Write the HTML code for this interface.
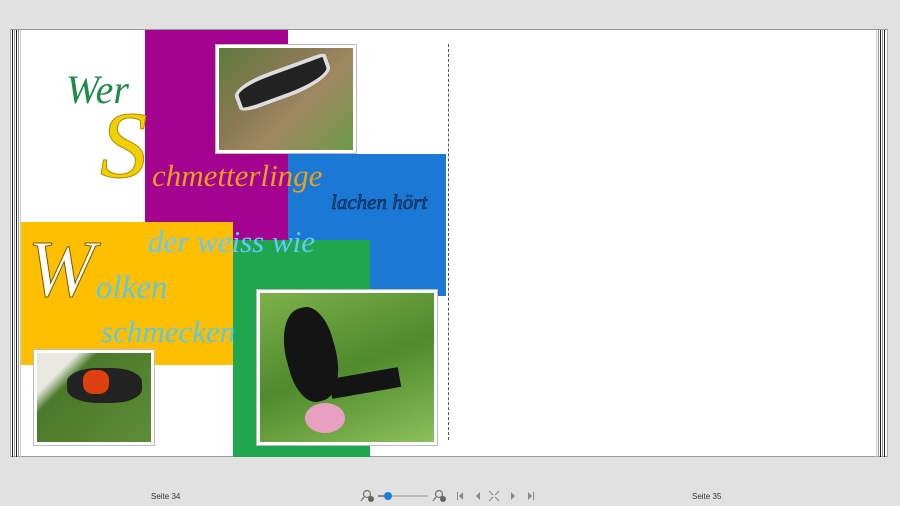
<!DOCTYPE html>
<html><head><meta charset="utf-8"><style>
*{margin:0;padding:0;box-sizing:border-box}
body{width:900px;height:506px;background:#e1e1e1;position:relative;overflow:hidden;font-family:"Liberation Sans",sans-serif}
.a{position:absolute}
.t{position:absolute;font-family:"Liberation Serif",serif;font-style:italic;white-space:nowrap;line-height:1}
.photo{position:absolute;border:3px solid #fff;box-shadow:0 0 0 1px #bbb}
</style></head><body>
<div class="a" style="left:10px;top:29px;width:878px;height:428px;background:#fff;border-top:1px solid #999;border-bottom:1px solid #999"></div>
<div class="a" style="left:10px;top:29px;width:1px;height:428px;background:#aaa"></div>
<div class="a" style="left:12px;top:30px;width:1px;height:427px;background:#222"></div>
<div class="a" style="left:14px;top:30px;width:1px;height:427px;background:#999"></div>
<div class="a" style="left:16px;top:30px;width:1px;height:427px;background:#222"></div>
<div class="a" style="left:18px;top:30px;width:1px;height:427px;background:#999"></div>
<div class="a" style="left:20px;top:30px;width:1px;height:427px;background:#ccc"></div>
<div class="a" style="left:876px;top:30px;width:1px;height:427px;background:#ccc"></div>
<div class="a" style="left:878px;top:30px;width:1px;height:427px;background:#999"></div>
<div class="a" style="left:880px;top:30px;width:1px;height:427px;background:#222"></div>
<div class="a" style="left:882px;top:30px;width:1px;height:427px;background:#999"></div>
<div class="a" style="left:884px;top:30px;width:1px;height:427px;background:#222"></div>
<div class="a" style="left:887px;top:29px;width:1px;height:428px;background:#aaa"></div>
<div class="a" style="left:448px;top:44px;width:0;height:396px;border-left:1px dashed #555"></div>
<div class="a" style="left:145px;top:30px;width:143px;height:232px;background:#a3038e"></div>
<div class="a" style="left:288px;top:154px;width:158px;height:142px;background:#1b79d5"></div>
<div class="a" style="left:21px;top:222px;width:212px;height:143px;background:#fdbf00"></div>
<div class="a" style="left:233px;top:240px;width:137px;height:217px;background:#1fa64e"></div>
<div class="photo" style="left:216px;top:45px;width:140px;height:108px;background:linear-gradient(135deg,#5e7a3a,#8b7a55 40%,#a08860 60%,#6d9a4a)">
 <div class="a" style="left:14px;top:20px;width:100px;height:30px;background:#222;transform:rotate(-20deg);border-radius:40% 10% 50% 20%;box-shadow:inset 0 0 0 4px #ddd"></div>
</div>
<div class="photo" style="left:257px;top:290px;width:180px;height:155px;background:linear-gradient(160deg,#7db04a,#4f8a2c 50%,#8cc05a)">
 <div class="a" style="left:26px;top:14px;width:50px;height:95px;background:#141414;border-radius:50% 40% 50% 40%;transform:rotate(-15deg)"></div>
 <div class="a" style="left:70px;top:80px;width:70px;height:20px;background:#141414;transform:rotate(-10deg)"></div>
 <div class="a" style="left:45px;top:110px;width:40px;height:30px;background:#e8a0c0;border-radius:50%"></div>
</div>
<div class="photo" style="left:34px;top:350px;width:120px;height:95px;background:linear-gradient(135deg,#e8e8e0 20%,#4a7a2a 30%,#5d8d35)">
 <div class="a" style="left:30px;top:15px;width:75px;height:35px;background:#222;border-radius:40%"></div>
 <div class="a" style="left:46px;top:17px;width:26px;height:24px;background:#e04010;border-radius:40%"></div>
</div>
<div class="t" style="left:66px;top:70px;font-size:40px;color:#1f8a4a">Wer</div>
<div class="t" style="left:100px;top:98px;font-size:95px;color:#f0d000;-webkit-text-stroke:1px #b08a00">S</div>
<div class="t" style="left:152px;top:160px;font-size:31px;color:#e8a020">chmetterlinge</div>
<div class="t" style="left:331px;top:192px;font-size:21px;color:#1a4f90;-webkit-text-stroke:0.6px #0a2040">lachen hört</div>
<div class="t" style="left:148px;top:226px;font-size:31px;color:#64c8ff">der weiss wie</div>
<div class="t" style="left:28px;top:230px;font-size:80px;color:#fff;-webkit-text-stroke:1px #7a5a00">W</div>
<div class="t" style="left:96px;top:272px;font-size:33px;color:#5cc8e8">olken</div>
<div class="t" style="left:101px;top:316px;font-size:31px;color:#5cc8e8">schmecken</div>
<div class="a" style="left:151px;top:492px;font-size:8px;color:#333">Seite 34</div>
<div class="a" style="left:692px;top:492px;font-size:8px;color:#333">Seite 35</div>
<svg class="a" style="left:360px;top:488px" width="180" height="16" viewBox="0 0 180 16">
<g fill="none" stroke="#777" stroke-width="1.3"><circle cx="7" cy="6" r="3.5"/><path d="M4 9 L1 13"/><circle cx="79" cy="6" r="3.5"/><path d="M76 9 L73 13"/></g>
<circle cx="11" cy="11" r="3" fill="#666"/><circle cx="83" cy="11" r="3" fill="#666"/>
<path d="M18 8 H24" stroke="#555" stroke-width="1.3"/><path d="M30 8 H68" stroke="#999" stroke-width="1"/>
<circle cx="28" cy="8" r="4" fill="#1a7fd6"/>
<g fill="#888"><rect x="97" y="4" width="1" height="8"/><path d="M103 4 L99 8 L103 12Z"/><path d="M120 4 L116 8 L120 12Z"/><path d="M151 4 L155 8 L151 12Z"/><path d="M168 4 L172 8 L168 12Z"/><rect x="173" y="4" width="1" height="8"/></g>
<g stroke="#888" stroke-width="1"><path d="M129 3 L133 7 M139 3 L135 7 M129 13 L133 9 M139 13 L135 9"/></g>
</svg>
</body></html>
